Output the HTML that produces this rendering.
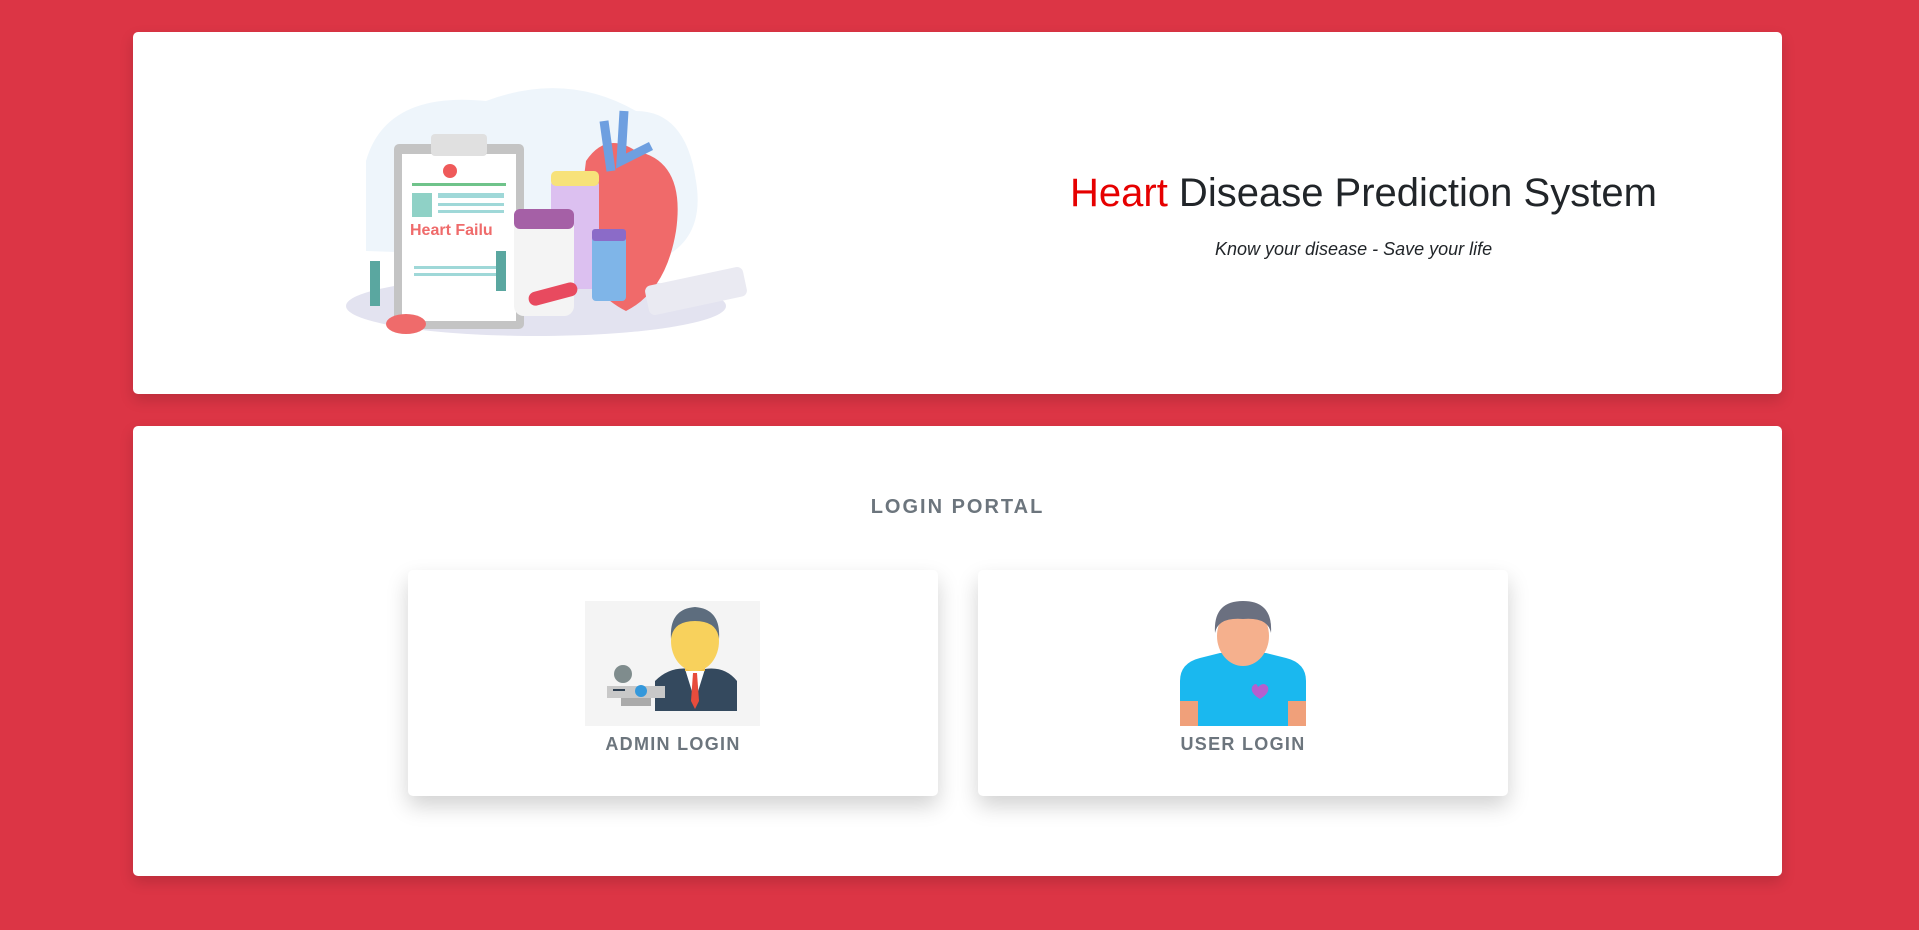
<!DOCTYPE html>
<html><head><meta charset="utf-8"><style>
*{margin:0;padding:0;box-sizing:border-box}
body{width:1919px;height:930px;background:#dc3545;font-family:"Liberation Sans",sans-serif;position:relative;overflow:hidden}
.card{position:absolute;left:133px;width:1649px;background:#fff;border-radius:5px;box-shadow:0 6px 14px rgba(0,0,0,.15)}
.t{position:absolute;white-space:nowrap}
.sub{position:absolute;background:#fff;border-radius:5px;box-shadow:0 10px 22px rgba(0,0,0,.18);top:570px;height:226px;width:530px}
.lbl{position:absolute;left:0;right:0;top:164px;text-align:center;font-weight:bold;font-size:18px;color:#6c757d;letter-spacing:1.3px}
</style></head><body>
<div class="card" style="top:32px;height:362px">
 <svg style="position:absolute;left:173px;top:19px" width="463" height="298" viewBox="0 0 463 298">
  <path d="M60 110 Q80 40 180 50 Q260 20 330 60 Q380 60 390 130 Q400 190 350 210 L60 200 Z" fill="#eef5fb"/>
  <ellipse cx="230" cy="255" rx="190" ry="30" fill="#e3e3f0"/>
  <rect x="88" y="93" width="130" height="185" rx="5" fill="#c4c4c4"/>
  <rect x="96" y="103" width="114" height="167" fill="#fff"/>
  <rect x="125" y="83" width="56" height="22" rx="4" fill="#e0e0e0"/>
  <circle cx="144" cy="120" r="7" fill="#ef5a5a"/>
  <rect x="106" y="132" width="94" height="3" fill="#6fc38a"/>
  <rect x="106" y="142" width="20" height="24" fill="#8fd1c6"/>
  <rect x="132" y="142" width="66" height="5" fill="#9fd8d8"/>
  <rect x="132" y="152" width="66" height="3" fill="#9fd8d8"/>
  <rect x="132" y="159" width="66" height="3" fill="#9fd8d8"/>
  <text x="104" y="184" font-size="16" font-weight="bold" fill="#ef6b6b" font-family="Liberation Sans">Heart Failu</text>
  <rect x="108" y="215" width="90" height="3" fill="#9fd8d8"/>
  <rect x="108" y="222" width="90" height="3" fill="#9fd8d8"/>
  <path d="M280 110 Q300 80 330 100 Q380 110 370 180 Q360 240 320 260 Q280 240 270 190 Z" fill="#f06a6a"/>
  <path d="M298 70 L305 120 M318 60 L315 110 L345 95" stroke="#6e9fe0" stroke-width="9" fill="none"/>
  <rect x="245" y="128" width="48" height="110" rx="6" fill="#dcc0f0"/>
  <rect x="245" y="120" width="48" height="15" rx="5" fill="#f7e27a"/>
  <rect x="208" y="165" width="60" height="100" rx="10" fill="#f4f4f4"/>
  <rect x="208" y="158" width="60" height="20" rx="6" fill="#a560a6"/>
  <rect x="286" y="185" width="34" height="65" rx="4" fill="#7fb5e8"/>
  <rect x="286" y="178" width="34" height="12" rx="3" fill="#8b6bc8"/>
  <rect x="340" y="225" width="100" height="30" rx="6" fill="#eaeaf2" transform="rotate(-12 390 240)"/>
  <ellipse cx="100" cy="303" rx="20" ry="10" fill="#ef6b6b" transform="translate(0,-30)"/>
  <rect x="222" y="236" width="50" height="14" rx="7" fill="#e84a5f" transform="rotate(-15 247 243)"/>
  <rect x="64" y="210" width="10" height="45" fill="#5aa7a0"/>
  <rect x="190" y="200" width="10" height="40" fill="#5aa7a0"/>
 </svg>
 <div class="t" style="left:937px;top:139px;font-size:40px;color:#212529"><span style="color:#e60000">Heart</span> Disease Prediction System</div>
 <div class="t" style="left:1082px;top:207px;font-size:18px;font-style:italic;color:#212529">Know your disease - Save your life</div>
</div>
<div class="card" style="top:426px;height:450px">
 <div class="t" style="left:0;right:0;top:70px;text-align:center;font-weight:bold;font-size:20px;color:#6c757d;letter-spacing:2px">LOGIN PORTAL</div>
</div>
<div class="sub" style="left:408px">
 <svg style="position:absolute;left:177px;top:31px" width="175" height="125" viewBox="0 0 175 125">
  <rect width="175" height="125" fill="#f4f4f4"/>
  <path d="M70 100 L70 80 Q85 65 105 68 L120 68 Q140 65 152 80 L152 110 L70 110 Z" fill="#34495e"/>
  <path d="M100 68 L110 100 L120 68 Z" fill="#fff"/>
  <path d="M108 72 L106 100 L110 108 L114 100 L112 72 Z" fill="#e74c3c"/>
  <rect x="100" y="50" width="20" height="20" fill="#f5c24c"/>
  <ellipse cx="110" cy="40" rx="24" ry="30" fill="#f8d15c"/>
  <path d="M86 38 Q84 8 110 6 Q136 8 134 38 Q132 20 110 20 Q88 20 86 38 Z" fill="#5d6d7e"/>
  <rect x="22" y="85" width="58" height="12" fill="#c8c8c8"/>
  <rect x="36" y="97" width="30" height="8" fill="#aaa"/>
  <circle cx="38" cy="73" r="9" fill="#7f8c8d"/>
  <rect x="28" y="88" width="12" height="2" fill="#2c3e50"/>
  <circle cx="56" cy="90" r="6" fill="#3498db"/>
 </svg>
 <div class="lbl">ADMIN LOGIN</div>
</div>
<div class="sub" style="left:978px">
 <svg style="position:absolute;left:200px;top:31px" width="130" height="125" viewBox="0 0 130 125">
  <path d="M2 80 Q2 62 22 57 L42 52 L88 52 L108 57 Q128 62 128 80 L128 125 L2 125 Z" fill="#1ab8ef"/>
  <rect x="2" y="100" width="18" height="25" fill="#f0a07a"/>
  <rect x="110" y="100" width="18" height="25" fill="#f0a07a"/>
  <rect x="52" y="45" width="26" height="15" fill="#f0a07a"/>
  <ellipse cx="65" cy="35" rx="26" ry="30" fill="#f5b08d"/>
  <path d="M37 32 Q35 0 65 0 Q95 0 93 32 Q90 16 65 18 Q40 16 37 32 Z" fill="#6b7080"/>
  <path d="M80 86 Q86 80 90 86 Q92 92 82 98 Q72 92 74 86 Q78 80 80 86Z" fill="#b65fce"/>
 </svg>
 <div class="lbl">USER LOGIN</div>
</div>
</body></html>
